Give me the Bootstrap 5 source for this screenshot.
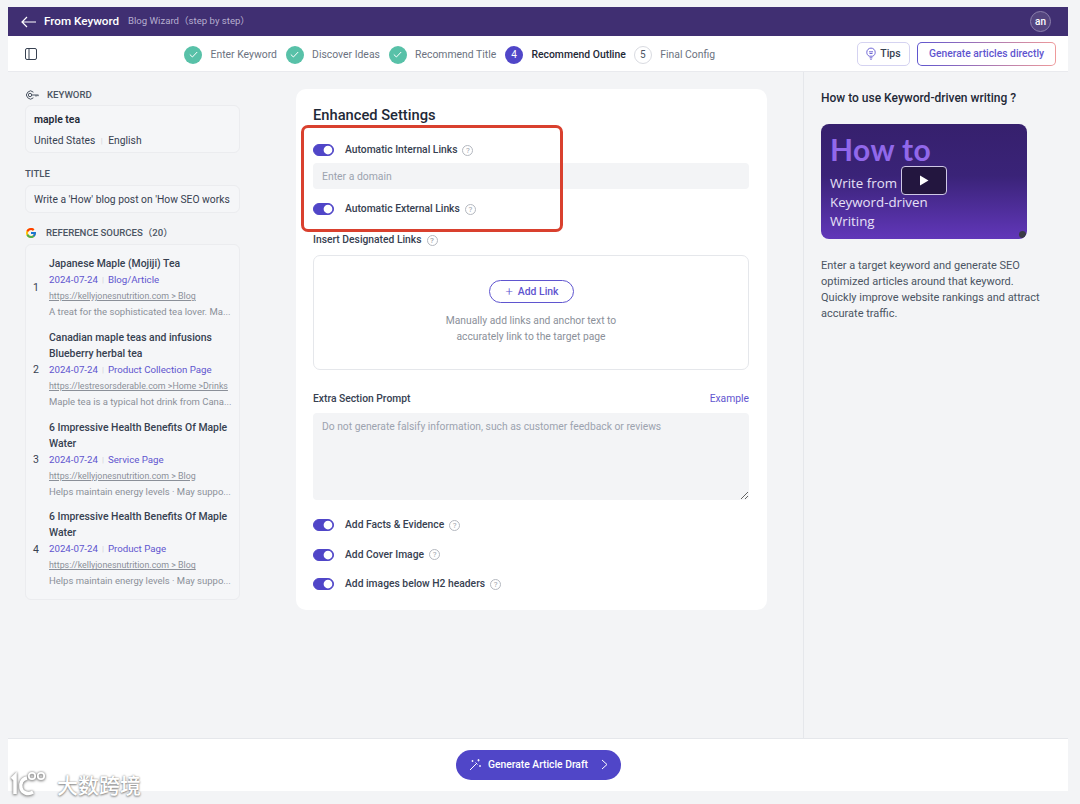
<!DOCTYPE html>
<html lang="en">
<head>
<meta charset="UTF-8">
<meta name="viewport" content="width=device-width, initial-scale=1.0">
<title>From Keyword - Blog Wizard</title>
<link href="https://cdn.jsdelivr.net/npm/bootstrap@5.3.0/dist/css/bootstrap.min.css" rel="stylesheet">
<style>
    body {
        background-color: #f3f4f6;
        font-family: Roboto, "Liberation Sans", sans-serif;
        font-size: 10.3px;
        color: #374151;
        height: 804px;
        overflow: hidden;
    }
    .app-frame { position: relative; margin: 7px 12px 0 8px; height: 784px; display: flex; flex-direction: column; }
    .top-bar { height: 29px; background-color: #402f72; color: #fff; padding: 0 17px 0 13px; }
    .top-title { font-size: 11.7px; font-weight: 500; margin-left: 8px; }
    .top-sub { font-size: 9.6px; color: #b6aecf; margin-left: 9px; font-family: Roboto, "Noto Sans CJK SC", sans-serif; }
    .avatar { width: 21px; height: 21px; border: 1px solid #8c80ad; background-color: #54457f; border-radius: 50%; font-size: 10px; font-weight: 500; }
    .step-bar { height: 36px; background-color: #fff; border-bottom: 1px solid #e9eaee; font-size: 10.4px; color: #6b7280; padding: 0 12px 0 17px; position: relative; }
    .steps { position: absolute; left: 176px; top: 1px; height: 35px; }
    .step-dot { width: 18px; height: 18px; border-radius: 50%; margin-right: 8.5px; font-size: 10px; }
    .step-done { background-color: #58c1a8; }
    .step-now { background-color: #5046c8; color: #fff; }
    .step-next { border: 1px solid #d9dbe1; color: #4b5563; }
    .step-item { margin-right: 8.7px; }
    .step-strong { color: #1f2937; font-weight: 500; margin-right: 8px; }
    .tips-btn { height: 24px; width: 53px; border: 1px solid #d5d3f1; border-radius: 5px; color: #374151; font-size: 10.5px; font-weight: 500; background: #fff; padding: 0; }
    .direct-btn { height: 24px; width: 139px; margin-left: 7px; border: 1px solid transparent; border-radius: 5px; font-size: 10.3px; font-weight: 500; color: #5f55cf; padding: 0;
        background: linear-gradient(#fff, #fff) padding-box, linear-gradient(90deg, #5f55cf, #ef9a9a) border-box; }
    .main-area { flex: 1; min-height: 0; }
    .left-col { width: 288px; padding: 17px 56px 0 17px; flex-shrink: 0; }
    .side-label { font-size: 9.6px; font-weight: 500; color: #4b5563; line-height: 12px; font-family: Roboto, "Noto Sans CJK SC", sans-serif; }
    .side-box { background-color: #f5f6f8; border: 1px solid #ebecef; border-radius: 6px; padding: 0 8px; }
    .kw-box { height: 48px; margin-top: 4px; padding-top: 7px; line-height: 14px; }
    .kw-name { font-weight: 600; color: #1f2937; font-size: 10.4px; margin-bottom: 7px; }
    .pipe { color: #d1d5db; margin: 0 4px; font-size: 8px; vertical-align: 1px; }
    .kw-box .pipe { margin: 0 5.5px; }
    .title-label { margin-top: 15px; }
    .title-box { height: 28px; margin-top: 5px; line-height: 27px; white-space: nowrap; overflow: hidden; }
    .source-label { margin-top: 14px; }
    .source-label svg { margin-right: 9px; }
    .ref-box { margin-top: 5px; height: 356px; padding: 11px 7px 0 7px; }
    .ref-row { margin-bottom: 9.8px; }
    .ref-num { width: 16px; flex-shrink: 0; font-size: 10.5px; }
    .ref-body { min-width: 0; line-height: 16px; flex: 1; }
    .ref-title { font-weight: 500; color: #374151; font-size: 10.4px; }
    .ref-meta { color: #5f55cf; white-space: nowrap; font-size: 9.7px; }
    .ref-url { color: #8b9099; font-size: 8.85px; text-decoration: underline; white-space: nowrap; }
    .ref-desc { color: #8b9099; font-size: 9.5px; white-space: nowrap; }
    .set-card { width: 471px; height: 521px; margin-top: 17px; background-color: #fff; border-radius: 10px; padding: 16.5px 18px 0 17px; flex-shrink: 0; }
    .set-title { font-size: 14.7px; font-weight: 500; color: #1f2937; line-height: 18px; margin-bottom: 20.5px; }
    .switch-row { height: 12px; margin: 0; padding: 0; display: flex; align-items: center; min-height: 0; }
    .switch-row .form-check-input { width: 21px; height: 12px; margin: 0 11px 0 0; float: none; background-color: #5046c8; border-color: #5046c8; box-shadow: none;
        background-image: url("data:image/svg+xml,%3csvg xmlns='http://www.w3.org/2000/svg' viewBox='-4 -4 8 8'%3e%3ccircle r='3.5' fill='%23fff'/%3e%3c/svg%3e"); }
    .switch-label { font-weight: 500; color: #374151; line-height: 12px; }
    .hint { width: 11px; height: 11px; border: 1px solid #b4b8bf; border-radius: 50%; color: #a0a5ad; font-size: 8px; line-height: 9px; text-align: center; margin-left: 5px; display: inline-block; flex-shrink: 0; }
    .domain-input { height: 26px; margin: 7px 0 14px; background-color: #f3f4f6; border: 0; border-radius: 4px; font-size: 10.4px; padding: 0 9px; }
    .domain-input::placeholder, .extra-input::placeholder { color: #9ca3af; }
    .field-label { font-weight: 500; color: #374151; line-height: 12px; }
    .insert-label { margin-top: 19px; }
    .link-box { height: 115px; margin-top: 9px; border: 1px solid #e5e7eb; border-radius: 7px; text-align: center; padding-top: 24px; color: #8b9099; line-height: 16px; }
    .add-link { width: 85px; height: 23px; border: 1px solid #5f55cf; border-radius: 12px; color: #5f55cf; font-weight: 500; font-size: 10.4px; padding: 0 0 0 2px; background: #fff; margin-bottom: 10px; }
    .plus-mark { font-size: 13px; font-weight: 300; line-height: 10px; margin-right: 5px; vertical-align: -1px; }
    .extra-head { margin-top: 21px; }
    .example-link { color: #5f55cf; text-decoration: none; }
    .extra-input { height: 87px; margin: 7px 0 19px; background-color: #f3f4f6; border: 0; border-radius: 4px; font-size: 10.3px; padding: 6px 9px; }
    .gap-row { margin-bottom: 17.5px; }
    .right-col { border-left: 1px solid #e5e7eb; margin-left: 36px; padding: 19px 20px 0 17px; flex: 1; }
    .help-title { font-size: 12px; font-weight: 500; color: #1f2937; line-height: 14px; margin-bottom: 19px; }
    .video-card { position: relative; width: 206px; height: 115px; border-radius: 8px; background: linear-gradient(180deg, #36206d 0%, #3a2378 45%, #6137b9 100%); color: #e6e0f7; font-family: "Open Sans", sans-serif; padding: 5px 9px; overflow: hidden; }
    .video-big { font-family: Lato, sans-serif; font-size: 30px; font-weight: 700; color: #9168ea; line-height: 40px; letter-spacing: .4px; margin-bottom: 5px; }
    .video-line { font-size: 13.3px; line-height: 19px; }
    .play-btn { position: absolute; left: 80px; top: 42px; width: 46px; height: 29px; background-color: #23163f; border: 1px solid #cfc8e6; border-radius: 4px; }
    .video-x { position: absolute; right: 1px; bottom: 1px; width: 7px; height: 7px; border-radius: 50%; background-color: #3a3a46; }
    .help-text { margin-top: 19px; color: #4b5563; line-height: 16px; font-size: 11px; }
    .bottom-bar { height: 53px; background-color: #fff; border-top: 1px solid #e5e7eb; }
    .draft-btn { width: 165px; height: 30px; background-color: #5046c8; border: 0; border-radius: 15px; color: #fff; font-size: 10.3px; font-weight: 500; padding: 0; margin-left: 1px; margin-top: -1px; }
    .draft-wand { margin-right: 6px; }
    .draft-arrow { margin-left: 13px; }
    .red-mark { position: absolute; left: 293px; top: 118px; width: 262px; height: 107px; border: 3px solid #d9402e; border-radius: 7px; pointer-events: none; }
    .wm-mark { position: absolute; left: 2px; bottom: -6px; color: #fff; font-family: "Noto Sans CJK SC", sans-serif; font-size: 21px; font-weight: 500; line-height: 24px; text-shadow: 0 0 2px #8a8a8a, 0 1px 2px #8a8a8a; }
    .wm-mark svg { filter: drop-shadow(0 0 1px #8a8a8a) drop-shadow(0 1px 1px #a0a0a0); margin-right: 7px; }
</style>
</head>
<body>
<div class="app-frame">
    <div class="top-bar d-flex align-items-center">
        <svg width="15" height="12" viewBox="0 0 15 12" fill="none" stroke="#fff" stroke-width="1.2"><path d="M15 6H1M6 1 1 6l5 5"/></svg>
        <span class="top-title">From Keyword</span>
        <span class="top-sub">Blog Wizard（step by step）</span>
        <span class="avatar d-flex align-items-center justify-content-center ms-auto">an</span>
    </div>

    <div class="step-bar d-flex align-items-center">
        <svg width="12" height="12" viewBox="0 0 12 12" fill="none" stroke="#374151" stroke-width="1"><rect x=".5" y=".5" width="11" height="11" rx="1.5"/><path d="M4 .5v11"/></svg>
        <div class="steps d-flex align-items-center">
            <span class="step-dot step-done d-flex align-items-center justify-content-center"><svg width="9" height="7" viewBox="0 0 9 7" fill="none" stroke="#fff" stroke-width="1"><path d="M.8 3.5 3.4 6 8.2 1"/></svg></span>
            <span class="step-item">Enter Keyword</span>
            <span class="step-dot step-done d-flex align-items-center justify-content-center"><svg width="9" height="7" viewBox="0 0 9 7" fill="none" stroke="#fff" stroke-width="1"><path d="M.8 3.5 3.4 6 8.2 1"/></svg></span>
            <span class="step-item">Discover Ideas</span>
            <span class="step-dot step-done d-flex align-items-center justify-content-center"><svg width="9" height="7" viewBox="0 0 9 7" fill="none" stroke="#fff" stroke-width="1"><path d="M.8 3.5 3.4 6 8.2 1"/></svg></span>
            <span class="step-item">Recommend Title</span>
            <span class="step-dot step-now d-flex align-items-center justify-content-center">4</span>
            <span class="step-strong">Recommend Outline</span>
            <span class="step-dot step-next d-flex align-items-center justify-content-center">5</span>
            <span>Final Config</span>
        </div>
        <button type="button" class="btn tips-btn ms-auto d-flex align-items-center justify-content-center gap-1">
            <svg width="10" height="13" viewBox="0 0 10 13" fill="none" stroke="#5f55cf" stroke-width=".9"><path d="M3.200 9.200C1.700 8.500.8 7.100.8 5.300a4.200 4.200 0 0 1 8.400 0c0 1.800-.9 3.200-2.400 3.900z"/><path d="M3 4.800h4M3.500 6.500h3M3.600 10.800h2.800M4.300 12.300h1.400"/></svg>
            Tips
        </button>
        <button type="button" class="btn direct-btn">Generate articles directly</button>
    </div>

    <div class="main-area d-flex">
        <aside class="left-col">
            <div class="side-label d-flex align-items-center gap-2">
                <svg width="14" height="10" viewBox="0 0 14 10" fill="none" stroke="#4b5563" stroke-width="1"><path d="M8.400 2.200A4 4 0 1 0 8.400 7.800"/><circle cx="5" cy="5" r="1.700"/><path d="M6.700 5H13.500M11 5v1.600M13 5v1.200"/></svg>
                KEYWORD
            </div>
            <div class="side-box kw-box">
                <div class="kw-name">maple tea</div>
                <div>United States<span class="pipe">|</span>English</div>
            </div>
            <div class="side-label title-label">TITLE</div>
            <div class="side-box title-box">Write a 'How' blog post on 'How SEO works</div>
            <div class="side-label source-label d-flex align-items-center">
                <svg width="12" height="12" viewBox="0 0 48 48"><path fill="#FFC107" d="M43.600 20H24v8h11.300C33.700 32.700 29.200 36 24 36c-6.600 0-12-5.400-12-12s5.400-12 12-12c3.100 0 5.800 1.200 8 3l5.700-5.700C34 6.100 29.300 4 24 4 13 4 4 13 4 24s9 20 20 20 20-9 20-20c0-1.300-.1-2.700-.4-4z"/><path fill="#FF3D00" d="m6.300 14.700 6.600 4.800C14.700 15.100 19 12 24 12c3.100 0 5.800 1.200 8 3l5.700-5.700C34 6.100 29.300 4 24 4 16.300 4 9.700 8.300 6.300 14.700z"/><path fill="#4CAF50" d="M24 44c5.200 0 9.900-2 13.400-5.200l-6.200-5.200C29.200 35.100 26.700 36 24 36c-5.200 0-9.600-3.300-11.300-8l-6.500 5C9.500 39.600 16.200 44 24 44z"/><path fill="#1976D2" d="M43.600 20H24v8h11.300c-.8 2.200-2.200 4.200-4.100 5.600l6.200 5.200C37 39.200 44 34 44 24c0-1.300-.1-2.700-.4-4z"/></svg>
                REFERENCE SOURCES（20）
            </div>
            <div class="side-box ref-box">
                <div class="ref-row d-flex align-items-center">
                    <span class="ref-num">1</span>
                    <div class="ref-body">
                        <div class="ref-title">Japanese Maple (Mojiji) Tea</div>
                        <div class="ref-meta">2024-07-24<span class="pipe">|</span>Blog/Article</div>
                        <div class="ref-url">https://kellyjonesnutrition.com &gt; Blog</div>
                        <div class="ref-desc">A treat for the sophisticated tea lover. Ma...</div>
                    </div>
                </div>
                <div class="ref-row d-flex align-items-center">
                    <span class="ref-num">2</span>
                    <div class="ref-body">
                        <div class="ref-title">Canadian maple teas and infusions Blueberry herbal tea</div>
                        <div class="ref-meta">2024-07-24<span class="pipe">|</span>Product Collection Page</div>
                        <div class="ref-url">https://lestresorsderable.com &gt;Home &gt;Drinks</div>
                        <div class="ref-desc">Maple tea is a typical hot drink from Cana...</div>
                    </div>
                </div>
                <div class="ref-row d-flex align-items-center">
                    <span class="ref-num">3</span>
                    <div class="ref-body">
                        <div class="ref-title">6 Impressive Health Benefits Of Maple Water</div>
                        <div class="ref-meta">2024-07-24<span class="pipe">|</span>Service Page</div>
                        <div class="ref-url">https://kellyjonesnutrition.com &gt; Blog</div>
                        <div class="ref-desc">Helps maintain energy levels · May suppo...</div>
                    </div>
                </div>
                <div class="ref-row d-flex align-items-center">
                    <span class="ref-num">4</span>
                    <div class="ref-body">
                        <div class="ref-title">6 Impressive Health Benefits Of Maple Water</div>
                        <div class="ref-meta">2024-07-24<span class="pipe">|</span>Product Page</div>
                        <div class="ref-url">https://kellyjonesnutrition.com &gt; Blog</div>
                        <div class="ref-desc">Helps maintain energy levels · May suppo...</div>
                    </div>
                </div>
            </div>
        </aside>

        <section class="set-card">
            <div class="set-title">Enhanced Settings</div>
            <div class="form-check form-switch switch-row">
                <input class="form-check-input" type="checkbox" role="switch" checked>
                <span class="switch-label">Automatic Internal Links</span><span class="hint">?</span>
            </div>
            <input type="text" class="form-control domain-input" placeholder="Enter a domain">
            <div class="form-check form-switch switch-row">
                <input class="form-check-input" type="checkbox" role="switch" checked>
                <span class="switch-label">Automatic External Links</span><span class="hint">?</span>
            </div>
            <div class="field-label insert-label d-flex align-items-center">Insert Designated Links<span class="hint">?</span></div>
            <div class="link-box">
                <button type="button" class="btn add-link"><span class="plus-mark">+</span>Add Link</button>
                <div>Manually add links and anchor text to<br>accurately link to the target page</div>
            </div>
            <div class="extra-head d-flex justify-content-between align-items-center">
                <span class="field-label">Extra Section Prompt</span>
                <a href="#" class="example-link">Example</a>
            </div>
            <textarea class="form-control extra-input" placeholder="Do not generate falsify information, such as customer feedback or reviews"></textarea>
            <div class="form-check form-switch switch-row gap-row">
                <input class="form-check-input" type="checkbox" role="switch" checked>
                <span class="switch-label">Add Facts &amp; Evidence</span><span class="hint">?</span>
            </div>
            <div class="form-check form-switch switch-row gap-row">
                <input class="form-check-input" type="checkbox" role="switch" checked>
                <span class="switch-label">Add Cover Image</span><span class="hint">?</span>
            </div>
            <div class="form-check form-switch switch-row">
                <input class="form-check-input" type="checkbox" role="switch" checked>
                <span class="switch-label">Add images below H2 headers</span><span class="hint">?</span>
            </div>
        </section>

        <aside class="right-col">
            <div class="help-title">How to use Keyword-driven writing ?</div>
            <div class="video-card">
                <div class="video-big">How to</div>
                <div class="video-line">Write from</div>
                <div class="video-line">Keyword-driven</div>
                <div class="video-line">Writing</div>
                <div class="play-btn d-flex align-items-center justify-content-center">
                    <svg width="10" height="11" viewBox="0 0 10 11"><path fill="#fff" d="M1 .5v10l8.500-5z"/></svg>
                </div>
                <span class="video-x"></span>
            </div>
            <p class="help-text">Enter a target keyword and generate SEO optimized articles around that keyword. Quickly improve website rankings and attract accurate traffic.</p>
        </aside>
    </div>

    <div class="bottom-bar d-flex align-items-center justify-content-center">
        <button type="button" class="btn draft-btn d-flex align-items-center justify-content-center">
            <svg class="draft-wand" width="13" height="13" viewBox="0 0 13 13" fill="none" stroke="#fff" stroke-width="1"><path d="M1 12 7.500 5.500M6.500 4.500l2 2"/><path d="M9.500 1v2.500M8.300 2.200h2.500M3.500 2v2M2.500 3h2M11 7v2M10 8h2" stroke-width=".8"/></svg>
            Generate Article Draft
            <svg class="draft-arrow" width="7" height="11" viewBox="0 0 7 11" fill="none" stroke="#fff" stroke-width="1"><path d="m1 1 5 4.500L1 10"/></svg>
        </button>
    </div>

    <div class="red-mark"></div>
    <div class="wm-mark d-flex align-items-center">
        <svg width="40" height="26" viewBox="0 0 40 26" fill="none" stroke="#fff" stroke-width="3.500"><path d="M2 8 5 5v18"/><path d="M17 7c-5 1-7 5-6 10 1 5 7 7 12 4"/><circle cx="22" cy="5" r="3.200" stroke-width="1.800"/><circle cx="31" cy="5" r="3.200" stroke-width="1.800"/></svg>
        <span>大数跨境</span>
    </div>
</div>

<script src="https://cdn.jsdelivr.net/npm/bootstrap@5.3.0/dist/js/bootstrap.bundle.min.js"></script>
</body>
</html>
